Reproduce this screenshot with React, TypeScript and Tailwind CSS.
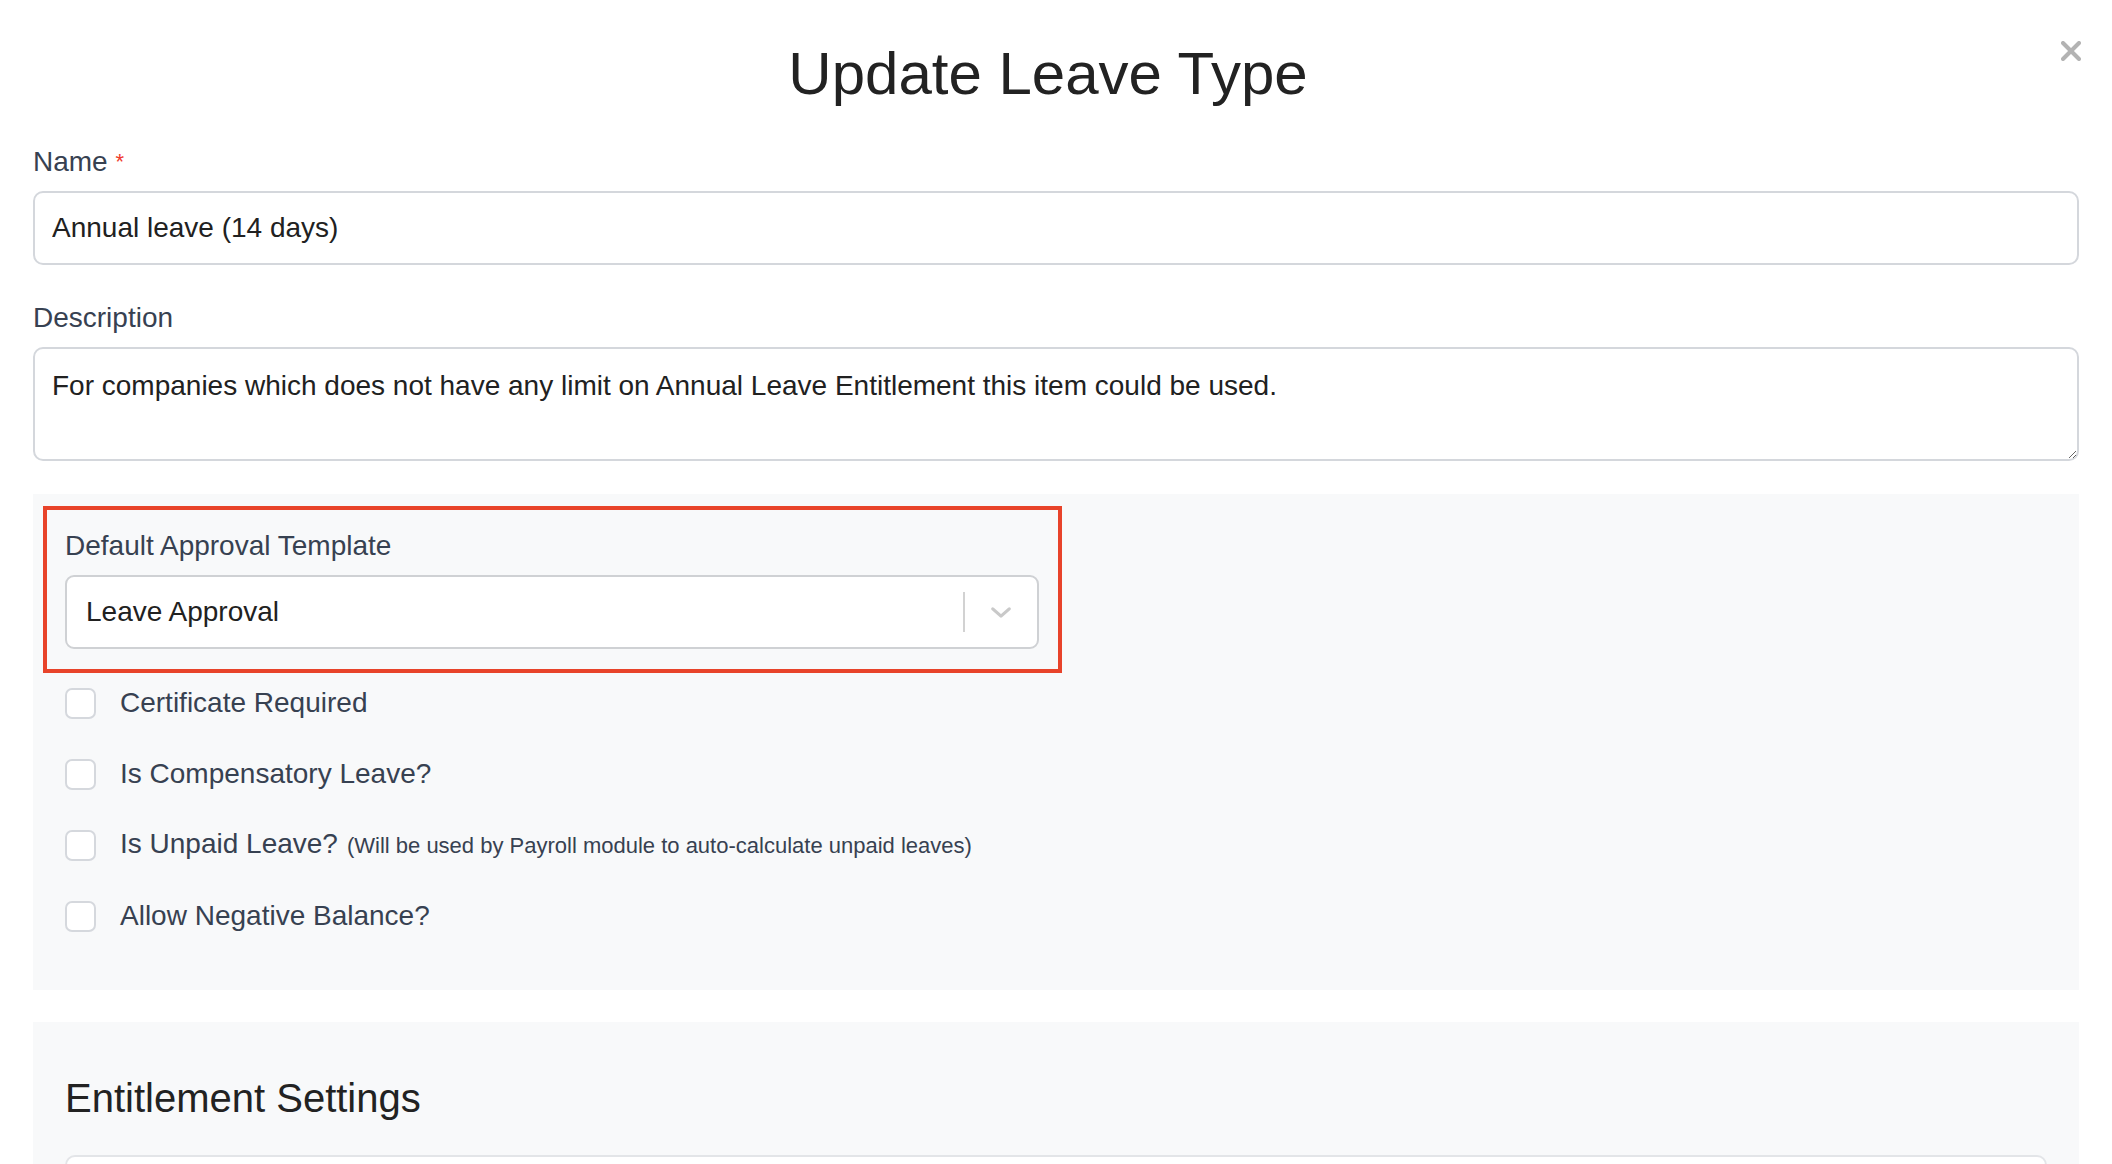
import React from "react";

const checks = [
    { label: "Certificate Required" },
    { label: "Is Compensatory Leave?" },
    { label: "Is Unpaid Leave?", note: "(Will be used by Payroll module to auto-calculate unpaid leaves)" },
    { label: "Allow Negative Balance?" },
];

function Checkbox() {
    return <span className="block w-[31px] h-[31px] shrink-0 rounded-[7px] border-2 border-[#d5d8dd] bg-white" />;
}

export default function App() {
    return (
        <div className="relative min-h-screen bg-white px-[33px] pb-[80px] font-['Liberation_Sans',Arial,sans-serif]">
            {/* close */}
            <button className="absolute right-[31px] top-[41px] w-[20px] h-[20px]">
                <svg viewBox="0 0 20 20" className="w-full h-full">
                    <line x1="2" y1="2" x2="18" y2="18" stroke="#b3b3b3" strokeWidth="4" strokeLinecap="round" />
                    <line x1="18" y1="2" x2="2" y2="18" stroke="#b3b3b3" strokeWidth="4" strokeLinecap="round" />
                </svg>
            </button>

            <h1 className="pt-[38px] pr-[16px] text-center text-[60px] leading-[72px] text-[#222]">Update Leave Type</h1>

            <label className="mt-[34px] block text-[28px] leading-[36px] text-[#374151]">
                Name <span className="text-[#ef3b2d] text-[22px] align-top">*</span>
            </label>
            <input
                className="mt-[11px] block w-full h-[74px] rounded-[10px] border-2 border-[#d4d7dc] bg-white px-[17px] text-[28px] text-[#212121] outline-none"
                defaultValue="Annual leave (14 days)"
            />

            <label className="mt-[35px] block text-[28px] leading-[36px] text-[#374151]">Description</label>
            <textarea
                className="mt-[11px] block w-full h-[114px] rounded-[10px] border-2 border-[#d4d7dc] bg-white px-[17px] pt-[19px] text-[28px] leading-[36px] text-[#212121] outline-none"
                defaultValue="For companies which does not have any limit on Annual Leave Entitlement this item could be used."
            />

            <div className="mt-[33px] bg-[#f8f9fa] px-[10px] pt-[12px] pb-[56px]">
                <div className="w-[1019px] border-[4px] border-[#e8432a] pl-[18px] pr-[19px] pt-[18px] pb-[20px]">
                    <div className="text-[28px] leading-[36px] text-[#374151]">Default Approval Template</div>
                    <div className="mt-[11px] flex h-[74px] items-center rounded-[9px] border-2 border-[#cfd1d4] bg-white pl-[19px]">
                        <span className="flex-1 text-[28px] text-[#212121]">Leave Approval</span>
                        <span className="h-[40px] w-[2px] bg-[#d2d2d2]" />
                        <span className="flex w-[72px] justify-center">
                            <svg viewBox="0 0 24 14" className="w-[22px] h-[13px]">
                                <polyline points="3,3 12,11 21,3" fill="none" stroke="#c9c9c9" strokeWidth="3.5" strokeLinecap="round" strokeLinejoin="round" />
                            </svg>
                        </span>
                    </div>
                </div>

                <div className="ml-[22px] mt-[12px] flex flex-col gap-[35px]">
                    {checks.map((c) => (
                        <div key={c.label} className="flex h-[36px] items-center gap-[24px]">
                            <Checkbox />
                            <span className="text-[28px] leading-[36px] text-[#374151]">
                                {c.label}
                                {c.note && <span className="ml-[9px] text-[22px]">{c.note}</span>}
                            </span>
                        </div>
                    ))}
                </div>
            </div>

            <div className="mt-[32px] bg-[#f8f9fa] px-[32px] pt-[52px] pb-[40px]">
                <h2 className="text-[40px] leading-[48px] text-[#222]">Entitlement Settings</h2>
                <div className="mt-[33px] h-[200px] rounded-[10px] border-2 border-[#e3e5e8] bg-white" />
            </div>
        </div>
    );
}
